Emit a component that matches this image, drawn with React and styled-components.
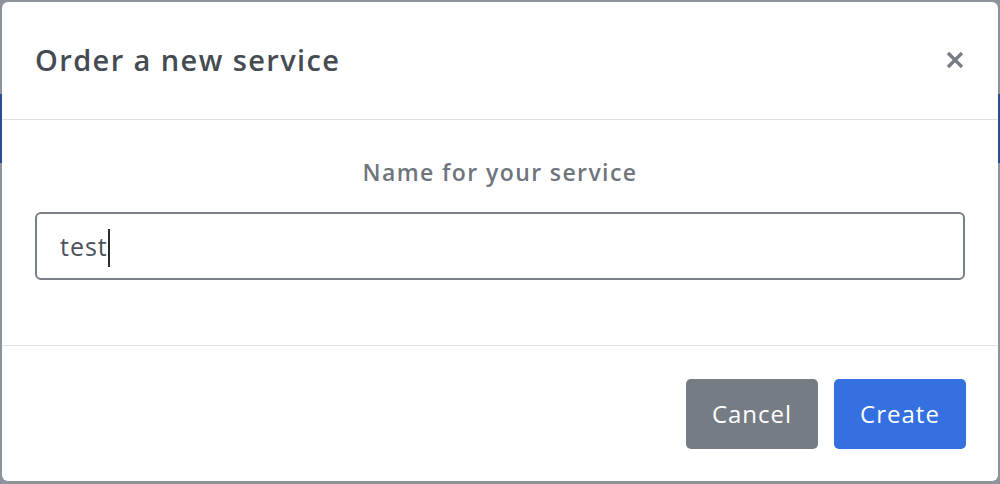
import React from "react";
import styled, { createGlobalStyle } from "styled-components";

const Global = createGlobalStyle`
  html, body { margin: 0; padding: 0; }
  body {
    width: 1000px;
    height: 484px;
    overflow: hidden;
    background: #8e929a;
    font-family: "Open Sans", "Noto Sans", sans-serif;
  }
  * { box-sizing: border-box; }
`;

const Backdrop = styled.div`
  position: relative;
  width: 1000px;
  height: 484px;
  padding: 2px 2px 3px 2px;
  background: #8e929a;
`;

const PageNavbar = styled.div`
  position: absolute;
  left: 0;
  right: 0;
  top: 94px;
  height: 69px;
  background: #2a4c98;
`;

const Modal = styled.div`
  position: relative;
  z-index: 1;
  height: 100%;
  background: #ffffff;
  border-radius: 6px;
  display: flex;
  flex-direction: column;
`;

const Header = styled.div`
  height: 118px;
  padding: 0 33px 0 33px;
  display: flex;
  align-items: center;
  justify-content: space-between;
  border-bottom: 1px solid #dee2e6;
`;

const Title = styled.h2`
  margin: 0;
  font-size: 29px;
  font-weight: 600;
  color: #454b52;
  letter-spacing: 1.4px;
  padding-bottom: 2px;
`;

const CloseButton = styled.button`
  border: 0;
  background: transparent;
  padding: 0;
  width: 20px;
  height: 20px;
  display: flex;
  align-items: center;
  justify-content: center;
  cursor: pointer;
  margin-top: -2px;
`;

const Body = styled.div`
  flex: 1;
  padding: 37px 33px 0 33px;
  display: flex;
  flex-direction: column;
  gap: 25px;
  border-bottom: 1px solid #dee2e6;
`;

const Label = styled.label`
  display: block;
  text-align: center;
  font-size: 23px;
  font-weight: 600;
  color: #70757d;
  line-height: 30px;
  letter-spacing: 1.4px;
`;

const InputBox = styled.div`
  flex: 0 0 68px;
  height: 68px;
  border: 2px solid #7b8088;
  border-radius: 6px;
  padding: 0 23px;
  display: flex;
  align-items: center;
  font-size: 25px;
  letter-spacing: 1px;
  color: #4c5259;
`;

const Caret = styled.span`
  display: inline-block;
  width: 2px;
  height: 38px;
  background: #2b2b2b;
  margin-top: 4px;
`;

const Footer = styled.div`
  height: 135px;
  padding: 0 32px 0 0;
  display: flex;
  align-items: center;
  justify-content: flex-end;
  gap: 16px;
`;

const Button = styled.button`
  width: 132px;
  height: 70px;
  border: 0;
  border-radius: 5px;
  font-family: inherit;
  font-size: 24px;
  letter-spacing: 1px;
  color: #ffffff;
  background: ${(p) => (p.$variant === "primary" ? "#3470e0" : "#767c83")};
  cursor: pointer;
`;

export default function App() {
  return (
    <>
      <Global />
      <Backdrop>
        <PageNavbar />
        <Modal role="dialog">
          <Header>
            <Title>Order a new service</Title>
            <CloseButton aria-label="Close">
              <svg width="18" height="18" viewBox="0 0 18 18">
                <path d="M2 2 L16 16 M16 2 L2 16" stroke="#777c84" strokeWidth="3.2" strokeLinecap="butt" />
              </svg>
            </CloseButton>
          </Header>
          <Body>
            <Label>Name for your service</Label>
            <InputBox role="textbox">
              <span>test</span>
              <Caret />
            </InputBox>
          </Body>
          <Footer>
            <Button>Cancel</Button>
            <Button $variant="primary">Create</Button>
          </Footer>
        </Modal>
      </Backdrop>
    </>
  );
}
